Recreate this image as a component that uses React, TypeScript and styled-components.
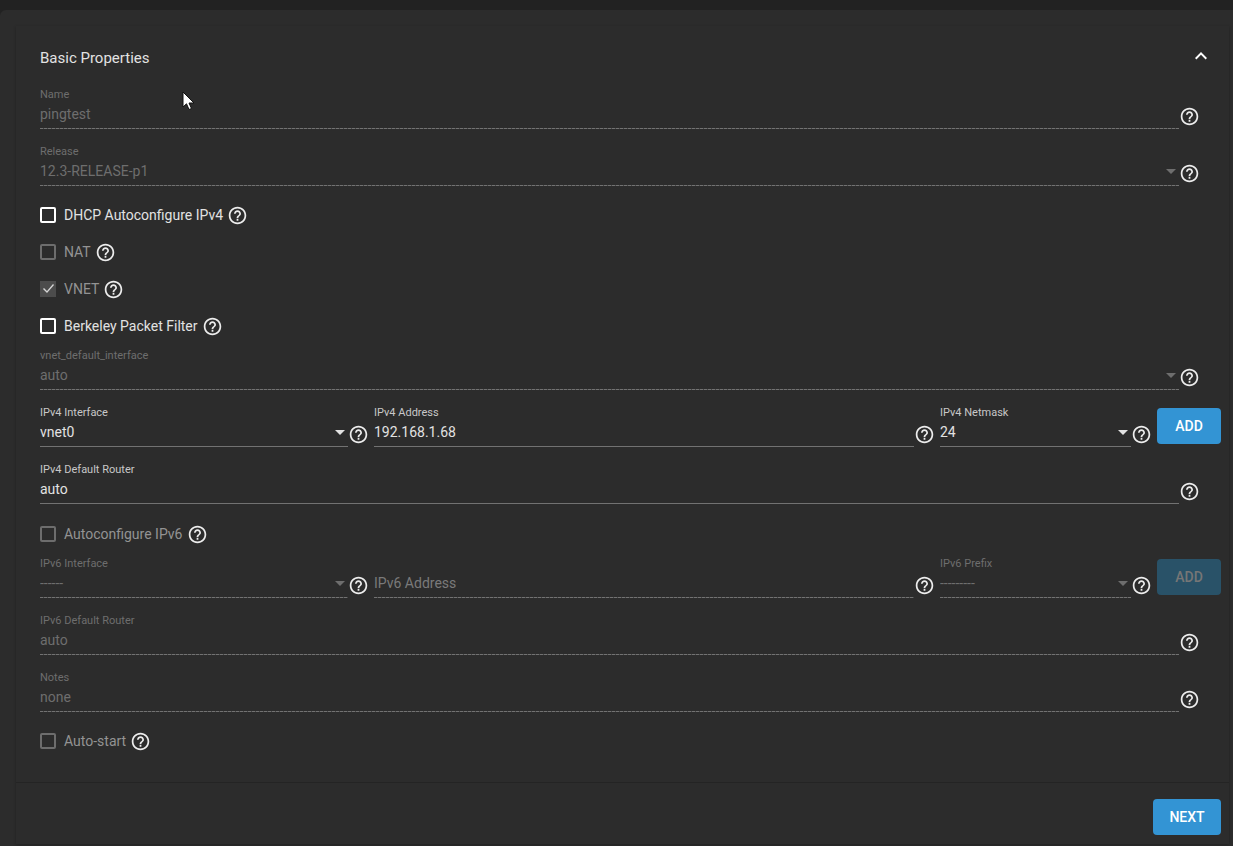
import React, { useId } from 'react';
import styled, { createGlobalStyle } from 'styled-components';
import { MdExpandLess, MdHelpOutline } from 'react-icons/md';

const colors = {
  backdrop: '#222222',
  surface: '#2c2c2c',
  text: '#e2e2e2',
  label: '#c8c8c8',
  muted: '#6e6e6e',
  mutedLabel: '#939393',
  line: '#727272',
  primary: '#3394d4',
  primaryOff: '#295268',
};

const GlobalStyle = createGlobalStyle`
  *, *::before, *::after { box-sizing: border-box; }
  body {
    margin: 0;
    background: ${colors.backdrop};
    color: ${colors.text};
    font-family: Roboto, "Liberation Sans", sans-serif;
    font-size: 14px;
  }
`;

const Page = styled.div`
  min-height: 100vh;
  padding-top: 10px;
  display: flex;
`;

const Card = styled.main`
  flex: 1;
  padding: 16px 4px 2px 16px;
  background: ${colors.surface};
  border-radius: 6px 0 0 0;
`;

const Panel = styled.form`
  background: ${colors.surface};
  box-shadow: 0 1px 3px rgba(0, 0, 0, 0.25);
`;

const Header = styled.header`
  display: flex;
  align-items: center;
  justify-content: space-between;
  padding: 18px 16px 0 24px;
`;

const Title = styled.h1`
  margin: 0;
  padding-top: 4px;
  font-size: 15px;
  line-height: 20px;
  font-weight: 400;
`;

const IconButton = styled.button`
  display: flex;
  padding: 0;
  border: 0;
  background: none;
  color: #fff;
  font-size: 24px;
`;

const Body = styled.div`
  padding: 19px 8px 18px 24px;
`;

const Section = styled.section`
  display: flex;
  flex-direction: column;
  padding-top: 1px;
`;

const FullRow = styled.div`
  margin-bottom: 16px;
  padding-right: 21px;
`;

const AddressRow = styled.div`
  display: grid;
  grid-template-columns: 329fr 561fr 212fr 64px;
  column-gap: 5px;
  align-items: start;
  margin-bottom: 16px;
`;

const FieldBox = styled.div`
  display: flex;
  align-items: flex-end;
  min-width: 0;
`;

const FieldMain = styled.div`
  flex: 1;
  min-width: 0;
`;

const FieldLabel = styled.label<{ $off?: boolean; $hidden?: boolean }>`
  display: block;
  height: 14px;
  font-size: 11px;
  line-height: 14px;
  color: ${(p) => (p.$off ? colors.muted : colors.label)};
  visibility: ${(p) => (p.$hidden ? 'hidden' : 'visible')};
`;

const Control = styled.div<{ $off?: boolean }>`
  display: flex;
  align-items: center;
  height: 27px;
  padding: 2px 3px 5px 0;
  color: ${(p) => (p.$off ? colors.muted : colors.text)};
  background: ${(p) =>
      p.$off
        ? `repeating-linear-gradient(to right, ${colors.line} 0 3px, #484848 3px 4px)`
        : `linear-gradient(${colors.line}, ${colors.line})`}
    bottom / 100% 1px no-repeat;

  input,
  select {
    flex: 1;
    min-width: 0;
    height: 20px;
    margin: 0;
    padding: 0;
    border: 0;
    outline: 0;
    appearance: none;
    background: none;
    color: inherit;
    font: inherit;
    line-height: 20px;
    opacity: 1;
  }

  input::placeholder {
    color: #7a7a7a;
    opacity: 1;
  }
`;

const Help = styled.span`
  display: flex;
  flex: none;
  color: #ececec;
  font-size: 21px;
`;

const FieldHelp = styled(Help)`
  padding-bottom: 2px;
`;

const CheckGroup = styled.div`
  display: flex;
  flex-direction: column;
  gap: 21px;
  margin: 5px 0 15px;
`;

const CheckRow = styled.div`
  display: flex;
  align-items: center;
  height: 16px;
`;

const CheckBox = styled.input`
  appearance: none;
  display: grid;
  place-content: center;
  flex: none;
  width: 16px;
  height: 16px;
  margin: 0 8px 0 0;
  border: 2px solid #fff;
  border-radius: 2px;

  &:disabled {
    border-color: #6d6d6d;
  }

  &:checked {
    border-color: #4c4c4c;
    border-radius: 0;
    background: #4c4c4c;
  }

  &:checked::before {
    content: '';
    width: 12px;
    height: 12px;
    background: #d6d6d6;
    clip-path: polygon(1px 6px, 2px 5px, 5px 8px, 11px 1px, 12px 2px, 5px 10px);
  }
`;

const CheckLabel = styled.label<{ $off?: boolean }>`
  margin-right: 4px;
  line-height: 16px;
  color: ${(p) => (p.$off ? colors.mutedLabel : colors.text)};
`;

const Button = styled.button`
  min-width: 64px;
  height: 36px;
  padding: 0 16px;
  border: 0;
  border-radius: 4px;
  background: ${colors.primary};
  color: #fff;
  font: 500 14px/36px Roboto, 'Liberation Sans', sans-serif;

  &:disabled {
    background: ${colors.primaryOff};
    color: #767676;
  }
`;

const AddButton = styled(Button)`
  margin-top: 2px;
`;

const NextButton = styled(Button)`
  min-width: 68px;
`;

const Footer = styled.footer`
  display: flex;
  justify-content: flex-end;
  padding: 16px 8px 9px;
  border-top: 1px solid #242424;
`;

const Pointer = styled.svg`
  position: absolute;
  left: 182px;
  top: 91px;
  pointer-events: none;
`;

interface FieldProps {
  label: string;
  value?: string;
  kind?: 'text' | 'select';
  off?: boolean;
  placeholder?: string;
}

function Field({ label, value = '', kind = 'text', off, placeholder }: FieldProps) {
  const id = useId();
  return (
    <FieldBox>
      <FieldMain>
        <FieldLabel htmlFor={id} $off={off} $hidden={!!placeholder}>
          {label}
        </FieldLabel>
        <Control $off={off}>
          {kind === 'select' ? (
            <>
              <select id={id} disabled={off} defaultValue={value}>
                <option>{value}</option>
              </select>
              <svg width="10" height="5" viewBox="0 0 10 5" aria-hidden="true">
                <path d="M0 0h10L5 5z" fill="currentColor" />
              </svg>
            </>
          ) : (
            <input id={id} type="text" disabled={off} defaultValue={value} placeholder={placeholder} />
          )}
        </Control>
      </FieldMain>
      <FieldHelp>
        <MdHelpOutline aria-hidden="true" />
      </FieldHelp>
    </FieldBox>
  );
}

function Check({ label, off, checked }: { label: string; off?: boolean; checked?: boolean }) {
  const id = useId();
  return (
    <CheckRow>
      <CheckBox id={id} type="checkbox" disabled={off} defaultChecked={checked} />
      <CheckLabel htmlFor={id} $off={off}>
        {label}
      </CheckLabel>
      <Help>
        <MdHelpOutline aria-hidden="true" />
      </Help>
    </CheckRow>
  );
}

export default function App() {
  return (
    <Page>
      <GlobalStyle />
      <Card>
        <Panel onSubmit={(e) => e.preventDefault()}>
          <Header>
            <Title>Basic Properties</Title>
            <IconButton type="button" aria-label="Collapse">
              <MdExpandLess />
            </IconButton>
          </Header>
          <Body>
            <Section>
              <FullRow>
                <Field label="Name" value="pingtest" off />
              </FullRow>
              <FullRow>
                <Field label="Release" value="12.3-RELEASE-p1" kind="select" off />
              </FullRow>
              <CheckGroup>
                <Check label="DHCP Autoconfigure IPv4" />
                <Check label="NAT" off />
                <Check label="VNET" off checked />
                <Check label="Berkeley Packet Filter" />
              </CheckGroup>
              <FullRow>
                <Field label="vnet_default_interface" value="auto" kind="select" off />
              </FullRow>
              <AddressRow>
                <Field label="IPv4 Interface" value="vnet0" kind="select" />
                <Field label="IPv4 Address" value="192.168.1.68" />
                <Field label="IPv4 Netmask" value="24" kind="select" />
                <AddButton type="button">ADD</AddButton>
              </AddressRow>
              <FullRow>
                <Field label="IPv4 Default Router" value="auto" />
              </FullRow>
            </Section>
            <Section>
              <CheckGroup>
                <Check label="Autoconfigure IPv6" off />
              </CheckGroup>
              <AddressRow>
                <Field label="IPv6 Interface" value="------" kind="select" off />
                <Field label="IPv6 Address" placeholder="IPv6 Address" off />
                <Field label="IPv6 Prefix" value="---------" kind="select" off />
                <AddButton type="button" disabled>
                  ADD
                </AddButton>
              </AddressRow>
              <FullRow>
                <Field label="IPv6 Default Router" value="auto" off />
              </FullRow>
              <FullRow>
                <Field label="Notes" value="none" off />
              </FullRow>
              <CheckGroup>
                <Check label="Auto-start" off />
              </CheckGroup>
            </Section>
          </Body>
          <Footer>
            <NextButton type="submit">NEXT</NextButton>
          </Footer>
        </Panel>
      </Card>
      <Pointer width="13" height="20" viewBox="0 0 13 20" aria-hidden="true">
        <path d="M1 1v15l3.500-3.200L7 18.500l2.500-1L7 12h5z" fill="#fff" stroke="#111" strokeWidth="1" />
      </Pointer>
    </Page>
  );
}
